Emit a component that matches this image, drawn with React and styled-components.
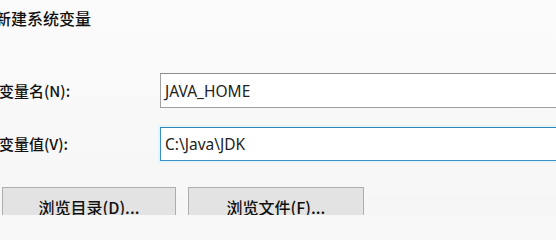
import React from "react";
import styled, { createGlobalStyle } from "styled-components";

const Global = createGlobalStyle`
  html, body { margin: 0; padding: 0; background: #f8f8f8; overflow: hidden; }
  body { font-family: "Noto Sans CJK SC", "Noto Sans", sans-serif; }
`;

const Dialog = styled.div`
  width: 556px;
  height: 215px;
  overflow: hidden;
  background: linear-gradient(180deg, #fbfbfb 0%, #f6f6f6 100%);
  display: flex;
  flex-direction: column;
`;

const Title = styled.div`
  margin: 8px 0 0 -5px;
  font-size: 16px;
  line-height: 20px;
  color: #111;
  font-weight: 500;
`;

const Form = styled.div`
  display: grid;
  grid-template-columns: 160px 430px;
  row-gap: 19px;
  align-items: center;
  margin-top: 45px;
`;

const Label = styled.label`
  font-size: 15px;
  line-height: 20px;
  color: #111;
  font-weight: 500;
  margin-left: -1px;
`;

const Input = styled.div`
  box-sizing: border-box;
  height: ${(p) => (p.$focused ? 34 : 35)}px;
  border: 1px solid ${(p) => (p.$focused ? "#3a8fc4" : "#a0a0a0")};
  border-top-color: ${(p) => (p.$focused ? "#2f86bd" : "#8c8c8c")};
  background: #fff;
  box-shadow: ${(p) => (p.$focused ? "0 0 0 2px #e4f6fb" : "none")};
  display: flex;
  align-items: center;
  padding-left: 4px;
  font-family: "Noto Sans", "Noto Sans CJK SC", sans-serif;
  font-size: 15.5px;
  color: #222;
`;

const Buttons = styled.div`
  display: flex;
  gap: 12px;
  margin-top: 26px;
  margin-left: 2px;
`;

const Button = styled.button`
  box-sizing: border-box;
  width: ${(p) => p.$w}px;
  height: 40px;
  border: 1px solid #adadad;
  background: #e3e3e3;
  font-family: "Noto Sans CJK SC", "Noto Sans", sans-serif;
  font-size: 16px;
  font-weight: 500;
  color: #111;
  padding: 0;
  flex-shrink: 0;
`;

export default function App() {
  return (
    <>
      <Global />
      <Dialog>
        <Title>新建系统变量</Title>
        <Form>
          <Label>变量名(N):</Label>
          <Input>JAVA_HOME</Input>
          <Label>变量值(V):</Label>
          <Input $focused>C:\Java\JDK</Input>
        </Form>
        <Buttons>
          <Button $w={174}>浏览目录(D)...</Button>
          <Button $w={176}>浏览文件(F)...</Button>
        </Buttons>
      </Dialog>
    </>
  );
}
